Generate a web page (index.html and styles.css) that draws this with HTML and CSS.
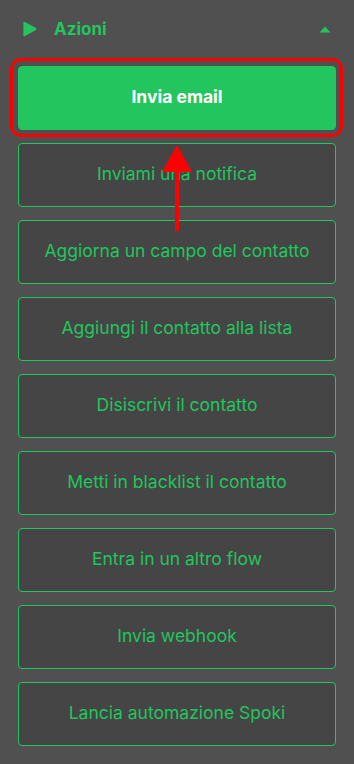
FILE: index.html
```html
<!DOCTYPE html>
<html lang="it">
<head>
<meta charset="utf-8">
<title>Azioni</title>
<link rel="stylesheet" href="styles.css">
</head>
<body>
<div class="panel">
  <div class="header">
    <svg class="play" width="14" height="16" viewBox="0 0 14 16"><path d="M1.5 0.8 L13 7.1 Q14 8 13 8.9 L1.5 15.2 Q0.4 15.7 0.4 14.5 L0.4 1.5 Q0.4 0.3 1.5 0.8 Z" fill="#22c55e"/></svg>
    <span class="title">Azioni</span>
    <svg class="caret" width="12" height="7" viewBox="0 0 12 7"><path d="M6 0.5 L11.5 6.5 L0.5 6.5 Z" fill="#22c55e"/></svg>
  </div>
  <div class="list">
    <div class="btn btn-primary">Invia email</div>
    <div class="btn">Inviami una notifica</div>
    <div class="btn">Aggiorna un campo del contatto</div>
    <div class="btn">Aggiungi il contatto alla lista</div>
    <div class="btn">Disiscrivi il contatto</div>
    <div class="btn">Metti in blacklist il contatto</div>
    <div class="btn">Entra in un altro flow</div>
    <div class="btn">Invia webhook</div>
    <div class="btn">Lancia automazione Spoki</div>
  </div>
  <svg class="arrow" width="32" height="88" viewBox="0 0 32 88"><path d="M16 0 L31 27 L1 27 Z" fill="#ff0000"/><rect x="14" y="26" width="4" height="60" fill="#ff0000"/></svg>
</div>
</body>
</html>
```
FILE: styles.css
```css
html, body {
  margin: 0;
  padding: 0;
  background: #505050;
}
body {
  font-family: Inter, "Noto Sans", sans-serif;
  width: 354px;
  height: 764px;
  overflow: hidden;
}
.panel {
  position: relative;
}
.header {
  height: 58px;
  display: flex;
  align-items: center;
  padding: 0 23px 0 23px;
  box-sizing: border-box;
}
.play {
  display: block;
  margin-top: -1px;
}
.title {
  margin-left: 17px;
  color: #22c55e;
  font-weight: 700;
  font-size: 17px;
  flex: 1;
}
.caret {
  display: block;
  margin-right: 0;
}
.list {
  display: flex;
  flex-direction: column;
  gap: 13px;
  padding: 8px 18px 0 18px;
}
.btn {
  height: 64px;
  box-sizing: border-box;
  padding-bottom: 3px;
  border: 1px solid #22c55e;
  border-radius: 4px;
  background: #454545;
  color: #22c55e;
  font-size: 17.5px;
  display: flex;
  align-items: center;
  justify-content: center;
}
.btn-primary {
  position: relative;
  background: #22c55e;
  color: #ffffff;
  font-weight: 700;
}
.btn-primary::after {
  content: "";
  position: absolute;
  left: -9px;
  right: -8px;
  top: -9px;
  bottom: -8px;
  border: 3px solid #ff0000;
  border-radius: 11px;
}
.arrow {
  position: absolute;
  left: 161px;
  top: 145px;
}
```
